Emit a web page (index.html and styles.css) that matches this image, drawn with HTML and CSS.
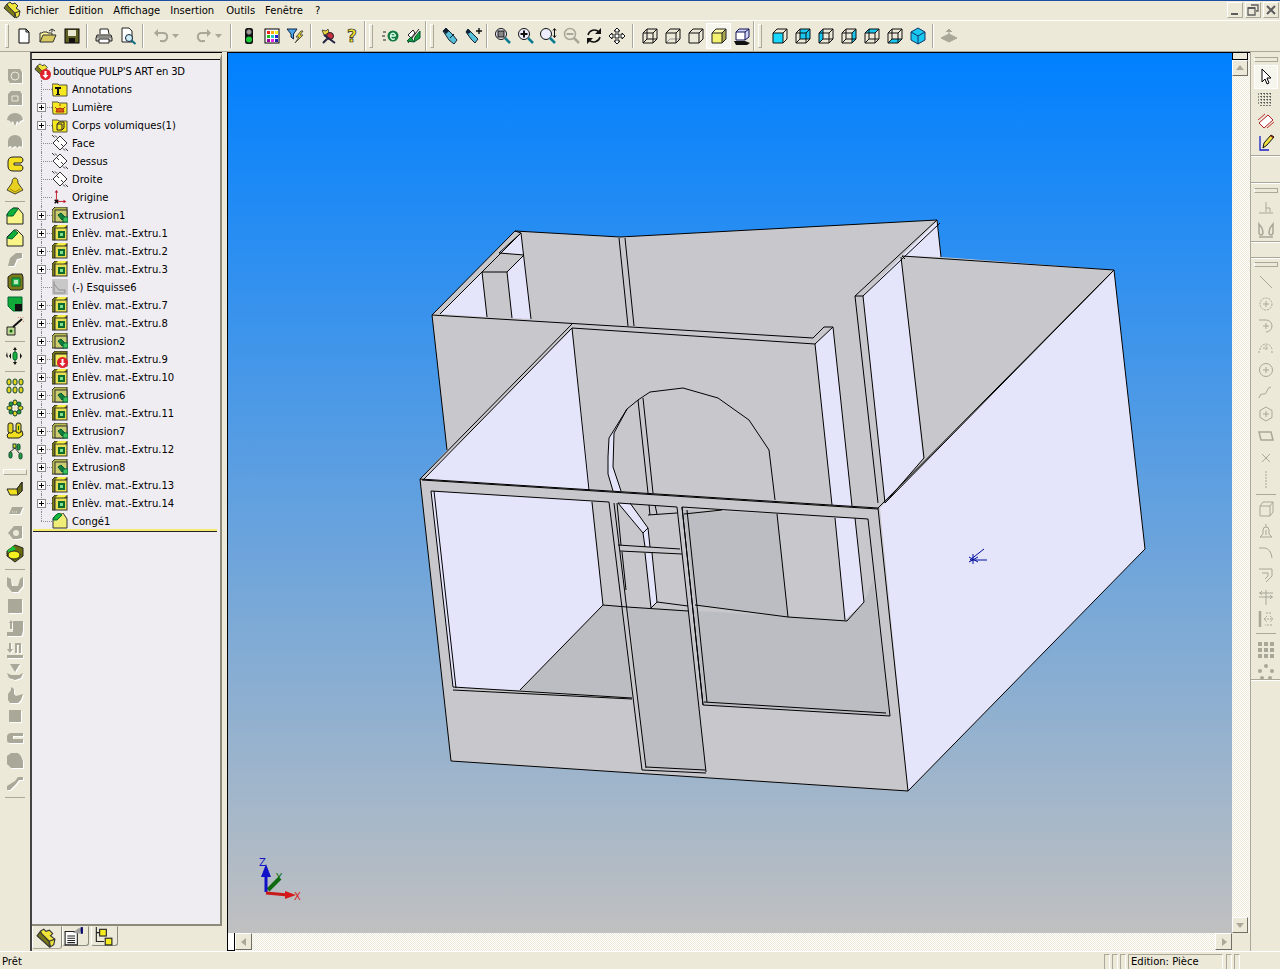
FILE: index.html
```html
<!DOCTYPE html>
<html lang="fr">
<head>
<meta charset="utf-8">
<title>SolidWorks - boutique PULP'S ART en 3D</title>
<link rel="stylesheet" href="styles.css">
</head>
<body>
<svg class="defs" xmlns="http://www.w3.org/2000/svg">
  <!-- file toolbar -->
  <symbol id="new" viewBox="0 0 18 18"><path d="M4 2h7l3 3v11H4z" fill="#fff" stroke="#000"/><path d="M11 2v3h3" fill="none" stroke="#000"/></symbol>
  <symbol id="open" viewBox="0 0 18 18"><path d="M1 15V6h2l1-1h4l1 1h4v2" fill="#fff6a0" stroke="#333"/><path d="M1 15l3-7h13l-3 7z" fill="#d8c860" stroke="#333"/><path d="M10 4l3-2 3 2m-3-2v3" fill="none" stroke="#333"/></symbol>
  <symbol id="save" viewBox="0 0 18 18"><rect x="2" y="2" width="14" height="14" fill="#5e5e22" stroke="#000"/><rect x="5" y="3" width="8" height="6" fill="#e8e8d0"/><rect x="6" y="11" width="6" height="5" fill="#111"/></symbol>
  <symbol id="print" viewBox="0 0 18 18"><path d="M5 7V2h8l1 5" fill="#fff" stroke="#222"/><path d="M2 8h14l1 3v3H1v-3z" fill="#c8c8c0" stroke="#222"/><path d="M4 12h10v4H4z" fill="#fff" stroke="#222"/><path d="M2 10h14" stroke="#555"/></symbol>
  <symbol id="preview" viewBox="0 0 18 18"><path d="M3 1h7l3 3v11H3z" fill="#fff" stroke="#222"/><circle cx="10" cy="11" r="3.500" fill="#cfeff5" stroke="#124"/><path d="M12.500 13.500l4 3.500" stroke="#0a6a80" stroke-width="2"/></symbol>
  <symbol id="undo" viewBox="0 0 18 18"><path d="M5 6h7q4 1 3 5t-5 3H8" fill="none" stroke="#a9a798" stroke-width="2"/><path d="M6 2v8L2 6z" fill="#a9a798"/></symbol>
  <symbol id="redo" viewBox="0 0 18 18"><path d="M13 6H6q-4 1-3 5t5 3h2" fill="none" stroke="#a9a798" stroke-width="2"/><path d="M12 2v8l4-4z" fill="#a9a798"/></symbol>
  <symbol id="caret" viewBox="0 0 7 4"><path d="M0 0h7L3.500 4z" fill="#a9a798"/></symbol>
  <symbol id="traffic" viewBox="0 0 18 18"><rect x="5" y="1" width="8" height="16" rx="2.500" fill="#111"/><circle cx="9" cy="5" r="2.200" fill="#a99" stroke="#888"/><circle cx="9" cy="12.500" r="3" fill="#1ecb3a"/></symbol>
  <symbol id="colors" viewBox="0 0 18 18"><rect x="2" y="2" width="14" height="14" fill="#fff" stroke="#000"/><path d="M4 4h3v3H4z" fill="#e22"/><path d="M8 4h3v3H8z" fill="#fa0"/><path d="M12 4h3v3h-3z" fill="#ee2"/><path d="M4 8h3v3H4z" fill="#2b2"/><path d="M8 8h3v3H8z" fill="#2cc"/><path d="M12 8h3v3h-3z" fill="#22d"/><path d="M4 12h3v3H4z" fill="#909"/><path d="M8 12h3v3H8z" fill="#e2e"/><path d="M12 12h3v3h-3z" fill="#22a"/></symbol>
  <symbol id="filter" viewBox="0 0 18 18"><path d="M1 2h10L7.500 7v5L5 10V7z" fill="#4aa8e8" stroke="#124"/><path d="M15 4l-5 6h3l-4 6 8-8h-3l3-4z" fill="#e8d82a" stroke="#554"/></symbol>
  <symbol id="wizard" viewBox="0 0 18 18"><path d="M3 3l4 1 2-2 1 4-5 2z" fill="#f4d838" stroke="#554"/><circle cx="11" cy="9" r="3.500" fill="#c83040" stroke="#222"/><path d="M5 8l11 8M4 16l5-5" stroke="#224" stroke-width="2"/></symbol>
  <symbol id="rebuild" viewBox="0 0 18 18"><path d="M3 16L14 2" stroke="#222"/><path d="M3 8l5-5 2 3-4 5z" fill="#fff" stroke="#222"/><path d="M9 15l6-4v-7l-5 6z" fill="#10a040" stroke="#053"/><path d="M2 14l4-4 3 5z" fill="#10a040" stroke="#053"/></symbol>
  <symbol id="eqn" viewBox="0 0 18 18"><circle cx="11" cy="9" r="5.500" fill="#147a40"/><path d="M8.500 9h5M13.500 9a2.500 3 0 1 0-.8 2.500" fill="none" stroke="#dfe" stroke-width="1.300"/><path d="M1 5h3M0 9h3M1 13h3" stroke="#222"/></symbol>
  <symbol id="torch" viewBox="0 0 18 18"><path d="M1 4l3-3 7 7 4 5-3 4-5-4z" fill="#58c0d8" stroke="#123"/><path d="M1 4l3-3 3 3-3 3z" fill="#123"/><path d="M8 11l4-4" stroke="#123"/></symbol>
  <symbol id="torchp" viewBox="0 0 18 18"><path d="M1 5l2-3 6 6 4 4-3 4-4-4z" fill="#58c0d8" stroke="#123"/><path d="M1 5l2-3 3 3-3 2z" fill="#123"/><path d="M14 1v6M11 4h6" stroke="#111" stroke-width="1.400"/></symbol>
  <symbol id="zfit" viewBox="0 0 18 18"><circle cx="8" cy="7" r="5.500" fill="#eef" stroke="#111"/><rect x="5" y="4" width="6" height="6" fill="#888" stroke="#111"/><path d="M12 11l5 5" stroke="#0a7a90" stroke-width="2.500"/></symbol>
  <symbol id="zin" viewBox="0 0 18 18"><circle cx="8" cy="7" r="5.500" fill="#eef" stroke="#111"/><path d="M8 3.500v7M4.500 7h7" stroke="#111" stroke-width="2"/><path d="M12 11l5 5" stroke="#0a7a90" stroke-width="2.500"/></symbol>
  <symbol id="zarea" viewBox="0 0 18 18"><circle cx="7" cy="7" r="5.500" fill="#eef" stroke="#111"/><path d="M11 11l5 5" stroke="#0a7a90" stroke-width="2.500"/><path d="M15.500 2v8M14 3.500l1.500-2 1.500 2M14 8.500l1.500 2 1.500-2" fill="none" stroke="#111"/></symbol>
  <symbol id="zout" viewBox="0 0 18 18"><circle cx="8" cy="7" r="5.500" fill="none" stroke="#a9a798" stroke-width="1.500"/><path d="M4.500 7h7" stroke="#a9a798" stroke-width="2"/><path d="M12 11l5 5" stroke="#a9a798" stroke-width="2.500"/></symbol>
  <symbol id="rot" viewBox="0 0 18 18"><path d="M3 8a6.500 6.500 0 0 1 11-3" fill="none" stroke="#111" stroke-width="1.500"/><path d="M15 10a6.500 6.500 0 0 1-11 3" fill="none" stroke="#111" stroke-width="1.500"/><path d="M16 1v6h-6zM2 17v-6h6z" fill="#111"/></symbol>
  <symbol id="pan" viewBox="0 0 18 18"><path d="M9 1l3 3h-2v4h4V6l3 3-3 3v-2h-4v4h2l-3 3-3-3h2v-4H4v2L1 9l3-3v2h4V4H6z" fill="#fff" stroke="#111"/></symbol>
  <!-- cube modes -->
  <symbol id="cwire" viewBox="0 0 18 18"><path d="M2 6h10v10H2zM2 6l4-4h10L12 6M12 16l4-4V2M6 2v10h10M6 12l-4 4" fill="none" stroke="#111"/></symbol>
  <symbol id="chlg" viewBox="0 0 18 18"><path d="M6 12h10M6 12l-4 4" fill="none" stroke="#999"/><path d="M2 6h10v10H2zM2 6l4-4h10L12 6M12 16l4-4V2" fill="none" stroke="#111"/></symbol>
  <symbol id="chlr" viewBox="0 0 18 18"><path d="M2 6h10v10H2zM2 6l4-4h10L12 6M12 16l4-4V2" fill="none" stroke="#111"/></symbol>
  <symbol id="cshade" viewBox="0 0 18 18"><path d="M2 6h10v10H2z" fill="#f4f070"/><path d="M2 6l4-4h10L12 6z" fill="#fcfaa8"/><path d="M12 6l4-4v10l-4 4z" fill="#a8a850"/><path d="M2 6h10v10H2zM2 6l4-4h10L12 6M12 16l4-4V2" fill="none" stroke="#222"/></symbol>
  <symbol id="cshadow" viewBox="0 0 18 18"><path d="M1 14h11l5 2-3 2H3z" fill="#111"/><path d="M3 5h9v8H3z" fill="#fff"/><path d="M3 5l3-3h10l-4 3zM12 5l4-3v8l-4 3z" fill="#d0d4f8"/><path d="M3 5h9v8H3zM3 5l3-3h10l-4 3M12 13l4-3V2" fill="none" stroke="#115"/></symbol>
  <symbol id="vf" viewBox="0 0 18 18"><path d="M2 6h10v10H2z" fill="#19d8ff"/><use href="#chlr"/></symbol>
  <symbol id="vb" viewBox="0 0 18 18"><path d="M6 2h10v10H6z" fill="#19c8f0"/><use href="#cwire"/></symbol>
  <symbol id="vl" viewBox="0 0 18 18"><path d="M2 6l4-4v10l-4 4z" fill="#19c8f0"/><use href="#cwire"/></symbol>
  <symbol id="vr" viewBox="0 0 18 18"><path d="M12 6l4-4v10l-4 4z" fill="#19c8f0"/><use href="#cwire"/></symbol>
  <symbol id="vt" viewBox="0 0 18 18"><path d="M2 6l4-4h10l-4 4z" fill="#19c8f0"/><use href="#cwire"/></symbol>
  <symbol id="vm" viewBox="0 0 18 18"><path d="M2 16l4-4h10l-4 4z" fill="#19c8f0"/><use href="#cwire"/></symbol>
  <symbol id="vi" viewBox="0 0 18 18"><path d="M9 1l7 4v8l-7 4-7-4V5z" fill="#19c8f0" stroke="#136"/><path d="M2 5l7 4 7-4M9 9v8" fill="none" stroke="#136"/></symbol>
  <symbol id="dim" viewBox="0 0 18 18"><path d="M9 2v5M6 5l3-3 3 3M1 11l8-4 8 4-8 4z" fill="#a9a798" stroke="#a9a798"/></symbol>
  <!-- disabled left-toolbar glyphs -->
  <symbol id="g1" viewBox="0 0 20 20"><path d="M3 3h12l2 3v11H5l-2-3z" fill="#aaa898"/><circle cx="10" cy="10" r="4" fill="none" stroke="#ece9d8"/></symbol>
  <symbol id="g2" viewBox="0 0 20 20"><path d="M6 3h9l2 3v11H3V6z" fill="#aaa898"/><path d="M7 8h6v5H7z" fill="none" stroke="#ece9d8"/></symbol>
  <symbol id="g3" viewBox="0 0 20 20"><path d="M2 10a8 7 0 0 1 16 0l-3 1-1 2-2-2-2 5-2-5-2 2-1-2z" fill="#aaa898"/></symbol>
  <symbol id="g4" viewBox="0 0 20 20"><path d="M3 15V9a7 6 0 0 1 14 0v6l-3-1-1 2-3-2-3 2-1-2z" fill="#aaa898"/></symbol>
  <symbol id="g5" viewBox="0 0 20 20"><path d="M3 16l2-8 6-5h6v5l-5 1-3 7z" fill="#aaa898"/></symbol>
  <symbol id="g6" viewBox="0 0 20 20"><path d="M2 3l4 2 1 7h6l2-7 3-2v9l-5 6H7l-5-6z" fill="#aaa898"/></symbol>
  <symbol id="g7" viewBox="0 0 20 20"><rect x="3" y="3" width="14" height="14" fill="#aaa898"/></symbol>
  <symbol id="g8" viewBox="0 0 20 20"><path d="M2 18v-4h6V3h10v9l-1 5-1 1zM4 5l2-3 2 3H7v6H5V5z" fill="#aaa898"/></symbol>
  <symbol id="g9" viewBox="0 0 20 20"><path d="M2 18v-3h16v3zM2 9h2V3h2v6h2l-3 4zM10 13V3h6v10h-2V5h-2v8z" fill="#aaa898"/></symbol>
  <symbol id="g10" viewBox="0 0 20 20"><path d="M5 2h10l-5 8zM2 11l4 2h8l4-2-2 5-6 2-6-2z" fill="#aaa898"/></symbol>
  <symbol id="g11" viewBox="0 0 20 20"><path d="M3 10l3-4V3l3 2v5l2 2 7-2-2 6-3 3H5l-2-3z" fill="#aaa898"/></symbol>
  <symbol id="g12" viewBox="0 0 20 20"><rect x="4" y="4" width="12" height="12" fill="#aaa898"/></symbol>
  <symbol id="g13" viewBox="0 0 20 20"><path d="M2 8q1-3 4-3h12v3H8v3h10v4H5q-3 0-3-3z" fill="#aaa898"/></symbol>
  <symbol id="g14" viewBox="0 0 20 20"><path d="M6 3h7l3 3 2 5v7H6l-4-4V6z" fill="#aaa898"/></symbol>
  <symbol id="g15" viewBox="0 0 20 20"><path d="M2 14l8-5 3-4h5v3h-4l-3 4-6 6H2z" fill="#aaa898"/></symbol>
  <symbol id="g16" viewBox="0 0 20 20"><path d="M4 14l3-7h11l-3 7z" fill="#aaa898"/><path d="M7 12h5" stroke="#ece9d8" stroke-dasharray="1 1"/></symbol>
  <symbol id="g17" viewBox="0 0 20 20"><path d="M3 11l6-7h8v12l-4 1H8z" fill="#aaa898"/><circle cx="11" cy="11" r="3" fill="#ece9d8"/></symbol>
  <!-- colored left-toolbar glyphs -->
  <symbol id="c5" viewBox="0 0 20 20"><path d="M3 8q0-5 5-5h8q2 1 2 3t-2 3H9v2h7q2 1 2 3t-2 3H8q-5 0-5-5z" fill="#f4e020" stroke="#222"/></symbol>
  <symbol id="c6" viewBox="0 0 20 20"><path d="M7 7q0-5 3-5t3 5l5 7-8 4-8-4z" fill="#e8d020" stroke="#443"/><path d="M5 13l5 3 5-3" fill="none" stroke="#a08a00"/></symbol>
  <symbol id="c7" viewBox="0 0 20 20"><path d="M2 18V8l6-6h5l5 6v10z" fill="#f8f488" stroke="#222"/><path d="M2 10q1-6 7-8l4 1-5 7z" fill="#12b03a" stroke="#063"/></symbol>
  <symbol id="c8" viewBox="0 0 20 20"><path d="M2 18V9l7-7h3l6 6v10z" fill="#f8f488" stroke="#222"/><path d="M2 10l7-8 4 3-6 6z" fill="#12b03a" stroke="#063"/></symbol>
  <symbol id="c10" viewBox="0 0 20 20"><path d="M3 5l4-3h10l1 3v12l-3 1H6l-3-3z" fill="#7a7a18" stroke="#222"/><path d="M7 6h8v8H7z" fill="#28b84a" stroke="#063"/><path d="M9 8h4v4H9z" fill="#bfe8c0"/></symbol>
  <symbol id="c11" viewBox="0 0 20 20"><path d="M3 3h14v14H8l-5-5z" fill="#10a838" stroke="#063"/><path d="M10 10h7v7h-7z" fill="#111"/></symbol>
  <symbol id="c12" viewBox="0 0 20 20"><path d="M2 11h8v8H2z" fill="#bcd890" stroke="#222"/><circle cx="6" cy="15" r="1.500" fill="#161"/><path d="M8 11l9-8" stroke="#111" stroke-width="2"/><path d="M15 1l.5.5M18 5l.5.5M13 1l.5.5M18 1.500l.5.5" stroke="#c22"/></symbol>
  <symbol id="c13" viewBox="0 0 20 20"><path d="M10 3v14" stroke="#222"/><rect x="8" y="6" width="4" height="8" rx="2" fill="#18b038" stroke="#063"/><path d="M10 1l2 3H8zM10 19l2-3H8zM4 10l2-3v6zM2 6l-1 4 2 2M17 10l-2-3v6z" fill="#111"/></symbol>
  <symbol id="c14" viewBox="0 0 20 20"><g fill="#e0d420" stroke="#143"><rect x="2" y="3" width="4" height="6" rx="2"/><rect x="8" y="3" width="4" height="6" rx="2"/><rect x="14" y="3" width="4" height="6" rx="2"/><rect x="2" y="11" width="4" height="6" rx="2"/><rect x="8" y="11" width="4" height="6" rx="2"/><rect x="14" y="11" width="4" height="6" rx="2"/></g></symbol>
  <symbol id="c15" viewBox="0 0 20 20"><g fill="#e0d420" stroke="#143"><rect x="8" y="2" width="4" height="5" rx="2"/><rect x="8" y="13" width="4" height="5" rx="2"/><rect x="2" y="8" width="5" height="4" rx="2"/><rect x="13" y="8" width="5" height="4" rx="2"/></g><g fill="#20a040" stroke="#143"><rect x="4" y="4" width="4" height="4" rx="2"/><rect x="12" y="4" width="4" height="4" rx="2"/><rect x="4" y="12" width="4" height="4" rx="2"/><rect x="12" y="12" width="4" height="4" rx="2"/></g></symbol>
  <symbol id="c16" viewBox="0 0 20 20"><path d="M2 15l4-4h11l1 4-4 3H3z" fill="#f0e020" stroke="#222"/><rect x="3" y="3" width="5" height="10" rx="2" fill="#e0d420" stroke="#222"/><rect x="11" y="3" width="5" height="10" rx="2" fill="#e0d420" stroke="#222"/><path d="M13 6h1v4h-1z" fill="#161"/></symbol>
  <symbol id="c17" viewBox="0 0 20 20"><g fill="#20a040" stroke="#143"><rect x="4" y="10" width="3" height="6" rx="1.500"/><rect x="12" y="2" width="3" height="6" rx="1.500"/><rect x="14" y="11" width="3" height="6" rx="1.500"/></g><path d="M5 10l5-4 4 5M10 6V3" fill="none" stroke="#333"/><rect x="8" y="2" width="3" height="4" fill="#e0d420" stroke="#143"/></symbol>
  <symbol id="c18" viewBox="0 0 20 20"><path d="M2 11h10l5-7v9l-4 4H5z" fill="#f0e020" stroke="#222"/><path d="M12 11l5-7v9l-4 4z" fill="#6a6a10" stroke="#222"/></symbol>
  <symbol id="c21" viewBox="0 0 20 20"><path d="M10 1l8 3v8l-8 6-8-6V7z" fill="#6a6a10" stroke="#222"/><path d="M2 7l6-5 3 3-5 4z" fill="#18c038"/><ellipse cx="9" cy="11" rx="6" ry="4" fill="#f4f020" stroke="#222"/></symbol>
  <!-- right toolbar -->
  <symbol id="cursor" viewBox="0 0 18 18"><path d="M5 1v13l3-3 2 5 2-1-2-5h4z" fill="#fff" stroke="#000"/></symbol>
  <symbol id="grid" viewBox="0 0 18 18"><path d="M4 3v13M7 3v13M10 3v13M13 3v13M1 4h15M1 7h15M1 10h15M1 13h15" stroke="#333" stroke-width="1.200" stroke-dasharray="1 2"/></symbol>
  <symbol id="measure" viewBox="0 0 18 18"><path d="M2 11l9-8 5 5-9 8z" fill="#fff" stroke="#b02020"/><path d="M1 8l7-6M10 16l7-6" stroke="#c03030"/></symbol>
  <symbol id="sketch" viewBox="0 0 18 18"><path d="M3 2v14h9" fill="none" stroke="#1a20c0" stroke-width="1.300"/><path d="M6 14l1-5 7-8 3 2-7 8z" fill="#f2e040" stroke="#111"/><path d="M13 2l1-1 3 2-1 1z" fill="#701818"/></symbol>
  <symbol id="r1" viewBox="0 0 18 18"><path d="M9 3v10M9 9h4v4M2 14h14" fill="none" stroke="#a9a798"/></symbol>
  <symbol id="r2" viewBox="0 0 18 18"><path d="M2 3v8q0 3 2 3t2-3l-1-4zM16 3v8q0 3-2 3t-2-3l1-4zM2 16h14" fill="none" stroke="#a9a798" stroke-width="1.500"/></symbol>
  <symbol id="r3" viewBox="0 0 18 18"><path d="M3 3l12 12" stroke="#a9a798"/></symbol>
  <symbol id="r4" viewBox="0 0 18 18"><circle cx="9" cy="9" r="6" fill="none" stroke="#a9a798" stroke-dasharray="2 1"/><path d="M9 6v6M6 9h6" stroke="#a9a798"/></symbol>
  <symbol id="r5" viewBox="0 0 18 18"><path d="M2 3h7a6 6 0 0 1 0 12M9 6v6M6 9h6" fill="none" stroke="#a9a798"/></symbol>
  <symbol id="r6" viewBox="0 0 18 18"><path d="M3 11a6 6 0 0 1 12 0M9 6v6M6 9h6M1 13h3M14 13h3" fill="none" stroke="#a9a798" stroke-dasharray="2 1"/></symbol>
  <symbol id="r7" viewBox="0 0 18 18"><circle cx="9" cy="9" r="6.500" fill="none" stroke="#a9a798"/><path d="M9 6v6M6 9h6" stroke="#a9a798"/></symbol>
  <symbol id="r8" viewBox="0 0 18 18"><path d="M2 15q1-5 4-4t4-3 4-4" fill="none" stroke="#a9a798"/></symbol>
  <symbol id="r9" viewBox="0 0 18 18"><path d="M9 2l6 3.500v7L9 16l-6-3.500v-7zM9 6v6M6 9h6" fill="none" stroke="#a9a798"/></symbol>
  <symbol id="r10" viewBox="0 0 18 18"><path d="M2 5h12l2 8H4z" fill="none" stroke="#a9a798" stroke-width="1.500"/></symbol>
  <symbol id="r11" viewBox="0 0 18 18"><path d="M5 5l8 8M13 5l-8 8" stroke="#a9a798"/></symbol>
  <symbol id="r12" viewBox="0 0 18 18"><path d="M9 0v18" stroke="#a9a798" stroke-dasharray="2 1"/></symbol>
  <symbol id="r13" viewBox="0 0 18 18"><path d="M3 6h10v10H3zM3 6l3-4h10l-3 4M13 16l3-4V2" fill="none" stroke="#a9a798"/></symbol>
  <symbol id="r14" viewBox="0 0 18 18"><path d="M9 2v3M6 12V8a3 3 0 0 1 6 0v4l3 3H3zM9 8v5" fill="none" stroke="#a9a798"/></symbol>
  <symbol id="r15" viewBox="0 0 18 18"><path d="M2 4h6q6 1 7 10" fill="none" stroke="#a9a798"/></symbol>
  <symbol id="r16" viewBox="0 0 18 18"><path d="M2 3h13v7l-6 6M5 7h6v3l-3 3" fill="none" stroke="#a9a798"/></symbol>
  <symbol id="r17" viewBox="0 0 18 18"><path d="M9 2v15M2 5h14M2 9h14M5 3l-2 2 2 2M13 7l2 2-2 2" fill="none" stroke="#a9a798"/></symbol>
  <symbol id="r18" viewBox="0 0 18 18"><path d="M3 1v16" stroke="#a9a798" stroke-width="2.500"/><path d="M7 9h9M13 6l3 3-3 3M9 3l6 0M15 15H8M10 6l-3 3 3 3" fill="none" stroke="#a9a798" stroke-dasharray="2 1"/></symbol>
  <symbol id="r19" viewBox="0 0 18 18"><g fill="#a9a798"><rect x="1" y="1" width="4" height="4"/><rect x="7" y="1" width="4" height="4"/><rect x="13" y="1" width="4" height="4"/><rect x="1" y="7" width="4" height="4"/><rect x="7" y="7" width="4" height="4"/><rect x="13" y="7" width="4" height="4"/><rect x="1" y="13" width="4" height="4"/><rect x="7" y="13" width="4" height="4"/><rect x="13" y="13" width="4" height="4"/></g></symbol>
  <symbol id="r20" viewBox="0 0 18 18"><g fill="#a9a798"><circle cx="9" cy="3" r="2"/><circle cx="3" cy="8" r="2"/><circle cx="15" cy="8" r="2"/><circle cx="5" cy="15" r="2"/><circle cx="13" cy="15" r="2"/></g></symbol>
  <!-- tree -->
  <symbol id="part" viewBox="0 0 18 18"><path d="M1 7l11 10v-5L4 3z" fill="#77771a" stroke="#333"/><path d="M4 3l3-2 2 2 3-1 3 3-2 2 4 3-1 5-3 2-1-5-7-7z" fill="#efe43a" stroke="#333"/><path d="M12 12l5-2" stroke="#333"/></symbol>
  <symbol id="stop" viewBox="0 0 11 11"><circle cx="5.500" cy="5.500" r="5.500" fill="#e0202c"/><path d="M4.500 2h2v4h2l-3 3.500L2.500 6h2z" fill="#fff"/></symbol>
  <symbol id="plus" viewBox="0 0 9 9"><rect x=".5" y=".5" width="8" height="8" fill="#fff" stroke="#8c8c8c"/><path d="M2 4.500h5M4.500 2v5" stroke="#000"/></symbol>
  <symbol id="foldT" viewBox="0 0 16 16"><path d="M0 3h6l1 1h8v11H1z" fill="#f6e820" stroke="#554"/><path d="M3 6h6v2H7v5h1v1H4v-1h1V8H3z" fill="#111"/></symbol>
  <symbol id="foldL" viewBox="0 0 16 16"><path d="M0 3h6l1 1h8v11H1z" fill="#f6e820" stroke="#554"/><path d="M4 13a4 4 0 0 1 8 0zM8 5v2M3 8l2 2M13 8l-2 2" fill="#d86018" stroke="#b03010"/></symbol>
  <symbol id="foldB" viewBox="0 0 16 16"><path d="M0 3h6l1 1h8v11H1z" fill="#f6e820" stroke="#554"/><path d="M5 7h5v6H5z" fill="none" stroke="#222"/><path d="M5 7l2-2h5v6l-2 2" fill="none" stroke="#222"/></symbol>
  <symbol id="plane" viewBox="0 0 16 16"><path d="M8 1l7 7-7 7-7-7z" fill="#fff" stroke="#333"/><path d="M0 0l2.500 2.500M5 5l2 2M9 9l2 2M13.500 13.500l2.500 2.500M5 2.500L3 .5M11 13.500l2 2" stroke="#333" fill="none"/></symbol>
  <symbol id="origin" viewBox="0 0 18 18"><path d="M5 14V3M5 14h9" stroke="#c01020"/><path d="M5 1l2 3H3zM16 14l-3-2v4z" fill="#c01020"/><path d="M3 12l4 4M7 12l-4 4" stroke="#000" stroke-width="1.500"/></symbol>
  <symbol id="ext" viewBox="0 0 16 16"><path d="M0 3l3-3h12v12l-3 3H0z" fill="#b8b850" stroke="#333"/><rect x="3" y="3" width="12" height="12" fill="#cccc70" stroke="#333"/><path d="M6 8l3-2 4 4-3 3z" fill="#14803c" stroke="#053"/><rect x="11" y="10" width="5" height="5" fill="#3cc060" stroke="#063"/></symbol>
  <symbol id="cut" viewBox="0 0 16 16"><path d="M0 3l3-3h12v3H3v12H0z" fill="#7a7a10" stroke="#333"/><path d="M3 3l3-3h9l-3 3z" fill="#f8f040"/><rect x="3" y="3" width="12" height="12" fill="#e8e050" stroke="#333"/><rect x="6" y="6" width="7" height="7" fill="#0d6a30"/><rect x="8" y="8" width="3" height="3" fill="#7fe08a"/></symbol>
  <symbol id="cutr" viewBox="0 0 16 16"><path d="M0 3l3-3h12v3H3v12H0z" fill="#7a7a10" stroke="#333"/><rect x="3" y="3" width="12" height="12" fill="#f0ec58" stroke="#333"/></symbol>
  <symbol id="skt" viewBox="0 0 16 16"><rect width="16" height="16" fill="#c8c8c8"/><path d="M2 2v12h11M2 5l5 6h6v3" fill="none" stroke="#8e8e8e"/></symbol>
  <symbol id="fil" viewBox="0 0 16 16"><path d="M1 15V5l6-5h4l4 6v9z" fill="#f0ec78" stroke="#333"/><path d="M1 7q1-5 6-7l3 2-5 5z" fill="#14b83c" stroke="#063"/></symbol>
  <symbol id="tab2" viewBox="0 0 18 18"><path d="M1 5h11v12H1z" fill="#fff" stroke="#222"/><path d="M3 9h7M3 11h7M3 13h7M3 15h7" stroke="#222"/><path d="M8 6l5-4h3l-2 5z" fill="#a0a0a0"/><path d="M16 1v6" stroke="#006" stroke-width="2"/></symbol>
  <symbol id="tab3" viewBox="0 0 18 18"><path d="M3 1v13h7M3 6h4" fill="none" stroke="#222"/><rect x="6" y="3" width="6" height="6" fill="#f4ec20" stroke="#222"/><rect x="11" y="11" width="6" height="6" fill="#f4ec20" stroke="#222"/></symbol>
</svg>

<div class="app">
  <div class="strip"></div>

  <header class="menubar">
    <svg class="logo"><use href="#part"/></svg>
    <nav class="menu">
      <span class="mi">Fichier</span><span class="mi">Edition</span><span class="mi">Affichage</span><span class="mi mi-w">Insertion</span><span class="mi">Outils</span><span class="mi mi-w">Fenêtre</span><span class="mi">?</span>
    </nav>
    <div class="winctl">
      <span class="wbtn"><svg class="wic" viewBox="0 0 12 12"><path d="M2 9h7v2H2z" fill="#5d5d5d"/></svg></span>
      <span class="wbtn"><svg class="wic" viewBox="0 0 12 12"><path d="M4 1h7v6H9M1 4h7v7H1z" fill="none" stroke="#5d5d5d" stroke-width="1.300"/><path d="M1 4h7" stroke="#5d5d5d" stroke-width="2"/></svg></span>
      <span class="wbtn"><svg class="wic" viewBox="0 0 12 12"><path d="M2 2l8 8M10 2l-8 8" stroke="#5d5d5d" stroke-width="2"/></svg></span>
    </div>
  </header>

  <div class="toolbar">
    <span class="grip"></span>
    <span class="b24"><svg class="ic"><use href="#new"/></svg></span><span class="b24"><svg class="ic"><use href="#open"/></svg></span><span class="b24"><svg class="ic"><use href="#save"/></svg></span>
    <span class="sep s-a"></span>
    <span class="b24"><svg class="ic"><use href="#print"/></svg></span><span class="b24"><svg class="ic"><use href="#preview"/></svg></span>
    <span class="sep s-b"></span>
    <span class="bdrop"><svg class="ic"><use href="#undo"/></svg><svg class="car"><use href="#caret"/></svg></span>
    <span class="bdrop gap7"><svg class="ic"><use href="#redo"/></svg><svg class="car"><use href="#caret"/></svg></span>
    <span class="sep s-c"></span>
    <span class="b23"><svg class="ic"><use href="#traffic"/></svg></span><span class="b23"><svg class="ic"><use href="#colors"/></svg></span><span class="b23"><svg class="ic"><use href="#filter"/></svg></span>
    <span class="sep s-d"></span>
    <span class="b24"><svg class="ic"><use href="#wizard"/></svg></span><span class="b24"><span class="help">?</span></span>
    <span class="divider"></span><span class="grip g-1"></span>
    <span class="b23"><svg class="ic"><use href="#eqn"/></svg></span><span class="b23"><svg class="ic"><use href="#rebuild"/></svg></span>
    <span class="divider"></span><span class="grip g-2"></span>
    <span class="b23"><svg class="ic"><use href="#torch"/></svg></span><span class="b23"><svg class="ic"><use href="#torchp"/></svg></span>
    <span class="sep s-f"></span>
    <span class="b23"><svg class="ic"><use href="#zfit"/></svg></span><span class="b23"><svg class="ic"><use href="#zin"/></svg></span><span class="b23"><svg class="ic"><use href="#zarea"/></svg></span><span class="b23"><svg class="ic"><use href="#zout"/></svg></span><span class="b23"><svg class="ic"><use href="#rot"/></svg></span><span class="b23"><svg class="ic"><use href="#pan"/></svg></span>
    <span class="sep s-g"></span>
    <span class="b23"><svg class="ic"><use href="#cwire"/></svg></span><span class="b23"><svg class="ic"><use href="#chlg"/></svg></span><span class="b23"><svg class="ic"><use href="#chlr"/></svg></span><span class="b23 on"><svg class="ic"><use href="#cshade"/></svg></span><span class="b23"><svg class="ic"><use href="#cshadow"/></svg></span>
    <span class="divider"></span><span class="grip g-3"></span>
    <span class="b23"><svg class="ic"><use href="#vf"/></svg></span><span class="b23"><svg class="ic"><use href="#vb"/></svg></span><span class="b23"><svg class="ic"><use href="#vl"/></svg></span><span class="b23"><svg class="ic"><use href="#vr"/></svg></span><span class="b23"><svg class="ic"><use href="#vt"/></svg></span><span class="b23"><svg class="ic"><use href="#vm"/></svg></span><span class="b23"><svg class="ic"><use href="#vi"/></svg></span>
    <span class="sep s-e"></span>
    <span class="b23"><svg class="ic"><use href="#dim"/></svg></span>
  </div>

  <main class="main">
    <aside class="ltb">
      <span class="lb"><svg class="lic dis"><use href="#g1"/></svg></span>
      <span class="lb"><svg class="lic dis"><use href="#g2"/></svg></span>
      <span class="lb"><svg class="lic dis"><use href="#g3"/></svg></span>
      <span class="lb"><svg class="lic dis"><use href="#g4"/></svg></span>
      <span class="lb"><svg class="lic"><use href="#c5"/></svg></span>
      <span class="lb"><svg class="lic"><use href="#c6"/></svg></span>
      <span class="lsep"></span>
      <span class="lb"><svg class="lic"><use href="#c7"/></svg></span>
      <span class="lb"><svg class="lic"><use href="#c8"/></svg></span>
      <span class="lb"><svg class="lic dis"><use href="#g5"/></svg></span>
      <span class="lb"><svg class="lic"><use href="#c10"/></svg></span>
      <span class="lb"><svg class="lic"><use href="#c11"/></svg></span>
      <span class="lb"><svg class="lic"><use href="#c12"/></svg></span>
      <span class="lsep"></span>
      <span class="lb"><svg class="lic"><use href="#c13"/></svg></span>
      <span class="lsep"></span>
      <span class="lb"><svg class="lic"><use href="#c14"/></svg></span>
      <span class="lb"><svg class="lic"><use href="#c15"/></svg></span>
      <span class="lb"><svg class="lic"><use href="#c16"/></svg></span>
      <span class="lb"><svg class="lic"><use href="#c17"/></svg></span>
      <span class="lgrip"></span>
      <span class="lb"><svg class="lic"><use href="#c18"/></svg></span>
      <span class="lb"><svg class="lic dis"><use href="#g16"/></svg></span>
      <span class="lb"><svg class="lic dis"><use href="#g17"/></svg></span>
      <span class="lb"><svg class="lic"><use href="#c21"/></svg></span>
      <span class="lsep"></span>
      <span class="lb"><svg class="lic dis"><use href="#g6"/></svg></span>
      <span class="lb"><svg class="lic dis"><use href="#g7"/></svg></span>
      <span class="lb"><svg class="lic dis"><use href="#g8"/></svg></span>
      <span class="lb"><svg class="lic dis"><use href="#g9"/></svg></span>
      <span class="lb"><svg class="lic dis"><use href="#g10"/></svg></span>
      <span class="lb"><svg class="lic dis"><use href="#g11"/></svg></span>
      <span class="lb"><svg class="lic dis"><use href="#g12"/></svg></span>
      <span class="lb"><svg class="lic dis"><use href="#g13"/></svg></span>
      <span class="lb"><svg class="lic dis"><use href="#g14"/></svg></span>
      <span class="lb"><svg class="lic dis"><use href="#g15"/></svg></span>
      <span class="lsep"></span>
    </aside>

    <section class="manager">
      <div class="tree-frame">
        <div class="tree">
          <div class="root"><span class="rooticon"><svg class="ti"><use href="#part"/></svg><svg class="rootstop"><use href="#stop"/></svg></span><span class="rootlabel">boutique PULP'S ART en 3D</span></div>
          <div class="row"><span class="tw"></span><svg class="ti"><use href="#foldT"/></svg><span class="lab">Annotations</span></div>
          <div class="row"><span class="tw"><svg class="px"><use href="#plus"/></svg></span><svg class="ti"><use href="#foldL"/></svg><span class="lab">Lumière</span></div>
          <div class="row"><span class="tw"><svg class="px"><use href="#plus"/></svg></span><svg class="ti"><use href="#foldB"/></svg><span class="lab">Corps volumiques(1)</span></div>
          <div class="row"><span class="tw"></span><svg class="ti"><use href="#plane"/></svg><span class="lab">Face</span></div>
          <div class="row"><span class="tw"></span><svg class="ti"><use href="#plane"/></svg><span class="lab">Dessus</span></div>
          <div class="row"><span class="tw"></span><svg class="ti"><use href="#plane"/></svg><span class="lab">Droite</span></div>
          <div class="row"><span class="tw"></span><svg class="ti"><use href="#origin"/></svg><span class="lab">Origine</span></div>
          <div class="row"><span class="tw"><svg class="px"><use href="#plus"/></svg></span><svg class="ti"><use href="#ext"/></svg><span class="lab">Extrusion1</span></div>
          <div class="row"><span class="tw"><svg class="px"><use href="#plus"/></svg></span><svg class="ti"><use href="#cut"/></svg><span class="lab">Enlèv. mat.-Extru.1</span></div>
          <div class="row"><span class="tw"><svg class="px"><use href="#plus"/></svg></span><svg class="ti"><use href="#cut"/></svg><span class="lab">Enlèv. mat.-Extru.2</span></div>
          <div class="row"><span class="tw"><svg class="px"><use href="#plus"/></svg></span><svg class="ti"><use href="#cut"/></svg><span class="lab">Enlèv. mat.-Extru.3</span></div>
          <div class="row"><span class="tw"></span><svg class="ti"><use href="#skt"/></svg><span class="lab">(-) Esquisse6</span></div>
          <div class="row"><span class="tw"><svg class="px"><use href="#plus"/></svg></span><svg class="ti"><use href="#cut"/></svg><span class="lab">Enlèv. mat.-Extru.7</span></div>
          <div class="row"><span class="tw"><svg class="px"><use href="#plus"/></svg></span><svg class="ti"><use href="#cut"/></svg><span class="lab">Enlèv. mat.-Extru.8</span></div>
          <div class="row"><span class="tw"><svg class="px"><use href="#plus"/></svg></span><svg class="ti"><use href="#ext"/></svg><span class="lab">Extrusion2</span></div>
          <div class="row"><span class="tw"><svg class="px"><use href="#plus"/></svg></span><span class="errwrap"><svg class="ti"><use href="#cutr"/></svg><svg class="errstop"><use href="#stop"/></svg></span><span class="lab">Enlèv. mat.-Extru.9</span></div>
          <div class="row"><span class="tw"><svg class="px"><use href="#plus"/></svg></span><svg class="ti"><use href="#cut"/></svg><span class="lab">Enlèv. mat.-Extru.10</span></div>
          <div class="row"><span class="tw"><svg class="px"><use href="#plus"/></svg></span><svg class="ti"><use href="#ext"/></svg><span class="lab">Extrusion6</span></div>
          <div class="row"><span class="tw"><svg class="px"><use href="#plus"/></svg></span><svg class="ti"><use href="#cut"/></svg><span class="lab">Enlèv. mat.-Extru.11</span></div>
          <div class="row"><span class="tw"><svg class="px"><use href="#plus"/></svg></span><svg class="ti"><use href="#ext"/></svg><span class="lab">Extrusion7</span></div>
          <div class="row"><span class="tw"><svg class="px"><use href="#plus"/></svg></span><svg class="ti"><use href="#cut"/></svg><span class="lab">Enlèv. mat.-Extru.12</span></div>
          <div class="row"><span class="tw"><svg class="px"><use href="#plus"/></svg></span><svg class="ti"><use href="#ext"/></svg><span class="lab">Extrusion8</span></div>
          <div class="row"><span class="tw"><svg class="px"><use href="#plus"/></svg></span><svg class="ti"><use href="#cut"/></svg><span class="lab">Enlèv. mat.-Extru.13</span></div>
          <div class="row"><span class="tw"><svg class="px"><use href="#plus"/></svg></span><svg class="ti"><use href="#cut"/></svg><span class="lab">Enlèv. mat.-Extru.14</span></div>
          <div class="row last"><span class="tw"></span><svg class="ti"><use href="#fil"/></svg><span class="lab">Congé1</span></div>
          <div class="rollback"></div>
        </div>
      </div>
      <div class="tabs">
        <span class="tab active"><svg class="tabic"><use href="#part"/></svg></span>
        <span class="tab"><svg class="tabic"><use href="#tab2"/></svg></span>
        <span class="tab"><svg class="tabic"><use href="#tab3"/></svg></span>
      </div>
    </section>

    <section class="work">
      <div class="viewport">
        <svg class="model" viewBox="228 53 1004 880" xmlns="http://www.w3.org/2000/svg">
          <polygon class="wall" points="432,315 515,231 620,237 937,220 941,257 1114,270 1145,549 908,791 451,761 420,479 447,450"/>
          <polygon class="lav" points="440,314 482,272 487,317"/>
          <polygon class="wall" points="482,272 507,272 512,318 487,317"/>
          <polygon class="lav" points="507,272 524,255 531,319 512,318"/>
          <polygon class="lav" points="499,253 521,233 524,255"/>
          <polygon class="lav" points="815,344 833,327 852,506 832,505"/>
          <polygon class="lav" points="863,296 901,257 923,458 885,503"/>
          <polygon class="lav" points="937,221 941,257 902,256"/>
          <polygon class="lav" points="423,479 572,329 603,605 520,690 453,688"/>
          <polygon class="lav" points="627,409 609,438 608,457 608,474 613,491 621,491 613,467 614,433"/>
          <polygon class="floor" points="520,690 603,605 845,620 864,602 873,580 890,716 706,772 646,768 632,698"/>
          <polygon class="floor" points="683,510 777,514 788,617 695,605"/>
          <polygon class="lav" points="835,518 855,518 864,602 845,620"/>
          <polygon class="lav" points="618,503 630,503 648,528 650,547 645,547 643,533"/>
          <polygon class="lav" points="645,553 652,553 657,602 651,608"/>
          <path class="wall" fill-rule="evenodd" d="M420,479 L878,508 L908,791 L451,761 Z M431,491 L609,502 L632,698 L453,687 Z M617,503 L677,507 L681,549 L621,545 Z M622,552 L682,555 L706,771 L646,768 Z M682,507 L868,519 L890,716 L703,705 Z"/>
          <polygon class="lav" points="880,508 1114,271 1145,549 908,791"/>
          <path class="ln" d="M432,315 L515,231 L620,237 L937,220 L941,257 M440,314 L521,233 M515,231 L521,233 M482,272 L487,317 M507,272 L512,318 M482,272 L507,272 L524,255 M499,253 L524,255 M499,253 L521,233 M521,233 L531,319
          M619,238 L628,326 M625,238 L634,326
          M432,315 L813,338 L824,327 L833,327 L852,506 M572,328 L815,344 L833,327 M815,344 L832,505
          M432,315 L447,450
          M420,479 L572,324 M423,480 L572,328 M572,328 L589,490
          M855,296 L937,220 M855,296 L863,296 L940,223 M855,296 L878,503 M863,296 L885,503 M902,256 L1114,270 M901,257 L924,458 L885,503 M902,256 L905,259 M885,503 L1114,270
          M878,508 L1114,270 L1145,549 L908,791 L878,508
          M420,479 L878,508 M422,480 L878,509 M420,479 L451,761 L908,791
          M431,491 L609,502 M431,491 L453,687 L632,698 M434,491 L456,688 M453,690 L632,699
          M592,502 L603,605 L520,690 M603,605 L627,607
          M609,502 L642,770 M614,503 L646,768 M642,770 L706,773 M646,767 L705,770 M677,507 L706,772 M682,507 L703,705 M618,503 L677,507
          M618,545 L680,549 M620,551 L682,554 M617,503 L621,545 M622,552 L626,590
          M618,503 L643,533 L648,528 L630,503 M643,533 L645,547 M648,528 L650,547
          M645,553 L651,608 M652,553 L657,602 M651,608 L657,602 L688,606 M627,607 L688,611
          M649,505 L650,515 M655,505 L657,514 M648,515 L677,513
          M682,507 L868,519 L890,716 L703,705 L682,507 M687,510 L707,702 M704,702 L886,713 M684,514 L722,510
          M777,514 L788,617 M695,605 L788,617 L847,621 L864,602 M835,518 L845,620 M855,518 L864,602
          M638,400 L650,392 L683,388 L718,398 L749,420 L769,450 L775,500 M638,400 L627,409 L609,438 L608,457 L608,474 L613,491 M627,409 L614,433 L613,467 L621,491
          M638,400 L648,493 M643,398 L653,493"/>
          <g class="ori">
            <path d="M970,560 L984,549 M970,560 L987,560 M973,554 L973,564 M969,557 L978,562 M969,562 L978,557"/>
          </g>
          <g class="triad">
            <path class="ax-g" d="M268,890 L280,878"/>
            <path class="ax-b" d="M266,892 L266,872"/>
            <polygon class="ax-bh" points="266,864 271,877 261,877"/>
            <path class="ax-r" d="M266,893 L288,895"/>
            <polygon class="ax-rh" points="296,895 285,891 285,899"/>
            <text class="t-z" x="259" y="866">Z</text>
            <text class="t-y" x="276" y="881">Y</text>
            <text class="t-x" x="294" y="900">X</text>
          </g>
        </svg>
      </div>
      <div class="vsb">
        <span class="split-v"></span>
        <span class="sbb"><svg class="arr" viewBox="0 0 8 8"><path d="M0 6h8L4 1z"/></svg></span>
        <span class="track"></span>
        <span class="sbb"><svg class="arr" viewBox="0 0 8 8"><path d="M0 2h8L4 7z"/></svg></span>
      </div>
      <div class="hsb">
        <span class="split-h"></span>
        <span class="sbb"><svg class="arr" viewBox="0 0 8 8"><path d="M6 0v8L1 4z"/></svg></span>
        <span class="track"></span>
        <span class="sbb"><svg class="arr" viewBox="0 0 8 8"><path d="M2 0v8l5-4z"/></svg></span>
      </div>
      <div class="corner"></div>
    </section>

    <aside class="rtb">
      <span class="rgrip"></span>
      <span class="rb on"><svg class="ric"><use href="#cursor"/></svg></span>
      <span class="rb"><svg class="ric"><use href="#grid"/></svg></span>
      <span class="rb"><svg class="ric"><use href="#measure"/></svg></span>
      <span class="rb"><svg class="ric"><use href="#sketch"/></svg></span>
      <span class="rline l-a"></span>
      <span class="rline l-b"></span>
      <span class="rgrip"></span>
      <span class="rb"><svg class="ric"><use href="#r1"/></svg></span>
      <span class="rb"><svg class="ric"><use href="#r2"/></svg></span>
      <span class="rline l-c"></span>
      <span class="rline l-d"></span>
      <span class="rgrip"></span>
      <span class="rb"><svg class="ric"><use href="#r3"/></svg></span>
      <span class="rb"><svg class="ric"><use href="#r4"/></svg></span>
      <span class="rb"><svg class="ric"><use href="#r5"/></svg></span>
      <span class="rb"><svg class="ric"><use href="#r6"/></svg></span>
      <span class="rb"><svg class="ric"><use href="#r7"/></svg></span>
      <span class="rb"><svg class="ric"><use href="#r8"/></svg></span>
      <span class="rb"><svg class="ric"><use href="#r9"/></svg></span>
      <span class="rb"><svg class="ric"><use href="#r10"/></svg></span>
      <span class="rb"><svg class="ric"><use href="#r11"/></svg></span>
      <span class="rb"><svg class="ric"><use href="#r12"/></svg></span>
      <span class="rsep"></span>
      <span class="rb"><svg class="ric"><use href="#r13"/></svg></span>
      <span class="rb"><svg class="ric"><use href="#r14"/></svg></span>
      <span class="rb"><svg class="ric"><use href="#r15"/></svg></span>
      <span class="rb"><svg class="ric"><use href="#r16"/></svg></span>
      <span class="rb"><svg class="ric"><use href="#r17"/></svg></span>
      <span class="rb"><svg class="ric"><use href="#r18"/></svg></span>
      <span class="rsep rsep2"></span>
      <span class="rb"><svg class="ric"><use href="#r19"/></svg></span>
      <span class="rb"><svg class="ric"><use href="#r20"/></svg></span>
      <span class="rline l-e"></span>
    </aside>
  </main>

  <footer class="status">
    <span class="ready">Prêt</span>
    <span class="sp"></span><span class="sp"></span><span class="sp"></span>
    <span class="sp mode">Edition: Pièce</span>
    <span class="sp"></span><span class="sp"></span>
  </footer>
</div>
</body>
</html>
```
FILE: styles.css
```css
* { box-sizing: border-box; }
html, body { margin: 0; padding: 0; }
body { width: 1280px; height: 969px; overflow: hidden; background: #ece9d8; font-family: "DejaVu Sans", "Liberation Sans", Arial, sans-serif; font-size: 10px; color: #000; }
.defs { display: none; }
.app { display: flex; flex-direction: column; width: 1280px; height: 969px; }
.strip { height: 1px; background: #1d4fa0; flex: none; }

.menubar { height: 20px; flex: none; display: flex; align-items: center; padding-bottom: 1px; background: #ece9d8; border-bottom: 1px solid #fff; box-shadow: 0 1px 0 #aca899; }
.logo { width: 18px; height: 18px; margin-left: 3px; flex: none; }
.menu { display: flex; margin-left: 5px; }
.mi { margin-right: 10px; }
.mi-w { margin-right: 12px; }
.winctl { margin-left: auto; display: flex; gap: 2px; padding-right: 1px; }
.wbtn { width: 16px; height: 16px; background: #ece9d8; border: 1px solid; border-color: #fff #aca899 #aca899 #fff; display: flex; align-items: center; justify-content: center; }
.wic { width: 12px; height: 12px; }

.toolbar { height: 31px; flex: none; display: flex; align-items: center; background: #ece9d8; padding-left: 5px; border-bottom: 1px solid #aca899; }
.grip { width: 4px; height: 24px; border: 1px solid; border-color: #fff #aca899 #aca899 #fff; margin-right: 3px; flex: none; }
.g-1 { margin-left: 3px; margin-right: 6px; }
.g-2 { margin-left: 3px; margin-right: 5px; }
.g-3 { margin-left: 3px; margin-right: 6px; }
.b24, .b23, .bdrop { height: 24px; display: flex; align-items: center; justify-content: center; flex: none; }
.b24 { width: 24px; }
.b23 { width: 23px; }
.bdrop { width: 36px; padding-right: 1px; gap: 2px; }
.gap7 { margin-left: 7px; }
.on { background: #f7f6ee; outline: 1px solid #fff; }
.ic { width: 18px; height: 18px; }
.car { width: 7px; height: 4px; }
.help { font-family: "DejaVu Sans", sans-serif; font-weight: 700; font-size: 17px; color: #efe030; -webkit-text-stroke: .7px #222; }
.sep { width: 2px; height: 24px; border-left: 1px solid #aca899; border-right: 1px solid #fff; flex: none; }
.s-a { margin: 0 4px 0 2px; }
.s-b { margin: 0 4px 0 2px; }
.s-c { margin: 0 5px 0 3px; }
.s-d { margin: 0 4px 0 4px; }
.s-e { margin: 0 3px 0 3px; }
.s-f { margin: 0 2px 0 1px; }
.s-g { margin: 0 4px 0 4px; }
.divider { width: 2px; height: 30px; border-left: 1px solid #aca899; border-right: 1px solid #fff; flex: none; }

.main { flex: 1; min-height: 0; display: flex; }

.ltb { width: 30px; flex: none; display: flex; flex-direction: column; align-items: center; padding-top: 13px; }
.lb { height: 22px; width: 30px; display: flex; align-items: center; justify-content: center; flex: none; }
.lic { width: 20px; height: 20px; }
.dis { filter: drop-shadow(1px 1px 0 #fff); }
.lsep { width: 20px; height: 1px; margin: 4px 0 3px; border-top: 1px solid #aca899; flex: none; }
.lgrip { width: 24px; height: 6px; margin: 6px 0 2px; border: 1px solid; border-color: #fff #aca899 #aca899 #fff; flex: none; box-shadow: 0 -4px 0 -3px #aca899; }

.manager { width: 192px; flex: none; display: flex; flex-direction: column; border-left: 2px solid #444; border-top: 1px solid #000; }
.tree-frame { height: 873px; flex: none; background: #efedf2; border-right: 2px solid #8c8a7c; border-bottom: 2px solid #8c8a7c; border-top: 6px solid #ece9d8; }
.tree { border-top: 1px solid #111; padding-top: 2px; padding-left: 1px; }
.root { height: 18px; display: flex; align-items: center; }
.rooticon { position: relative; width: 16px; height: 16px; margin-left: 1px; display: block; flex: none; }
.rootstop { position: absolute; width: 11px; height: 11px; left: 6px; top: 6px; }
.rootlabel { margin-left: 3px; white-space: nowrap; letter-spacing: -.2px; }
.row { height: 18px; display: flex; align-items: center; }
.tw { position: relative; width: 19px; height: 18px; flex: none; }
.tw::before { content: ""; position: absolute; left: 8px; top: 0; bottom: 0; border-left: 1px dotted #8c8c8c; }
.tw::after { content: ""; position: absolute; left: 8px; top: 9px; width: 11px; border-top: 1px dotted #8c8c8c; }
.last .tw::before { bottom: 9px; }
.px { position: absolute; z-index: 1; left: 4px; top: 5px; width: 9px; height: 9px; }
.ti { width: 16px; height: 16px; flex: none; display: block; }
.lab { margin-left: 4px; white-space: nowrap; }
.errwrap { position: relative; width: 16px; height: 16px; flex: none; }
.errstop { position: absolute; left: 5px; top: 6px; width: 11px; height: 11px; }
.rollback { height: 3px; width: 184px; margin-top: -1px; background: #f4ec6c; border-bottom: 1px solid #222; }
.tabs { flex: 1; display: flex; align-items: flex-start; }
.tab { width: 27px; height: 20px; margin-right: 2px; padding-right: 3px; background: #ece9d8; border: 1px solid; border-color: #ece9d8 #8c8a7c #8c8a7c #fff; border-radius: 0 0 3px 3px; display: flex; align-items: center; justify-content: center; }
.tab.active { width: 30px; height: 23px; border-color: #ece9d8 #8c8a7c #aca899 #fff; margin-right: 0; }
.tabic { width: 20px; height: 20px; flex: none; }

.work { width: 1023px; margin-left: 5px; flex: none; display: grid; grid-template-columns: 1004px 19px; grid-template-rows: 880px 18px; border-left: 1px solid #000; border-top: 1px solid #000; height: 899px; }
.viewport { background: linear-gradient(180deg, #0080ff 0%, #c0c0c0 100%); overflow: hidden; }
.model { display: block; width: 1004px; height: 880px; }
.wall { fill: #c8c8cc; }
.lav { fill: #e4e4fb; }
.floor { fill: #bcbdc2; }
.ln { fill: none; stroke: #000; stroke-width: 1; }
.ori path { fill: none; stroke: #00109c; stroke-width: 1; }
.ax-b { stroke: #1010c8; stroke-width: 3; }
.ax-bh { fill: #1010c8; }
.ax-g { stroke: #106a10; stroke-width: 4; }
.ax-r { stroke: #c81818; stroke-width: 3; }
.ax-rh { fill: #d81818; }
.t-z { fill: #1010c8; font-size: 10px; }
.t-y { fill: #107010; font-size: 10px; }
.t-x { fill: #d81818; font-size: 10px; }

.vsb { display: flex; flex-direction: column; background-color: #f4f3ec; background-image: repeating-conic-gradient(#ece9d8 0% 25%, #fff 0% 50%); background-size: 2px 2px; }
.hsb { display: flex; background-color: #f4f3ec; background-image: repeating-conic-gradient(#ece9d8 0% 25%, #fff 0% 50%); background-size: 2px 2px; }
.split-v { height: 7px; width: 16px; background: #ece9d8; border: 1px solid #000; border-top: 0; flex: none; }
.split-h { width: 7px; height: 100%; background: #fff; border: 1px solid #000; border-width: 0 1px 1px 0; flex: none; }
.sbb { width: 16px; height: 16px; background: #ece9d8; border: 1px solid; border-color: #fff #716f64 #716f64 #fff; display: flex; align-items: center; justify-content: center; flex: none; }
.hsb .sbb { width: 17px; height: 17px; }
.arr { width: 8px; height: 8px; fill: #aca899; }
.track { flex: 1; }
.corner { background: #ece9d8; }

.rtb { width: 30px; flex: none; display: flex; flex-direction: column; align-items: center; padding-top: 5px; border-left: 1px solid #aca899; margin-left: 0; }
.rgrip { width: 24px; height: 5px; margin-bottom: 4px; border: 1px solid; border-color: #aca899 #aca899 #aca899 #fff; flex: none; }
.rb { width: 22px; height: 22px; display: flex; align-items: center; justify-content: center; flex: none; }
.rb.on { background: #f7f6ee; outline: 1px solid #fff; }
.ric { width: 18px; height: 18px; }
.rline { width: 29px; height: 1px; background: #aca899; flex: none; box-shadow: 0 1px 0 #fff; }
.l-a { margin-top: 1px; }
.l-b { margin-top: 26px; margin-bottom: 5px; }
.l-c { margin-top: 0; }
.l-d { margin-top: 15px; margin-bottom: 4px; }
.l-e { margin-top: -4px; }
.rsep { width: 20px; height: 1px; background: #aca899; margin: 3px 0; flex: none; }
.rsep2 { margin-bottom: 5px; }

.status { height: 18px; flex: none; display: flex; align-items: stretch; padding-top: 2px; border-top: 1px solid #fff; background: #ece9d8; }
.ready { padding-left: 2px; margin-right: auto; line-height: 15px; }
.sp { width: 6px; margin-right: 2px; border: 1px solid; border-color: #aca899 #fff #fff #aca899; border-bottom: 0; flex: none; }
.mode { width: 95px; margin-right: 3px; padding-left: 2px; line-height: 13px; white-space: nowrap; }
.status .sp:last-child { margin-right: 40px; }
```
